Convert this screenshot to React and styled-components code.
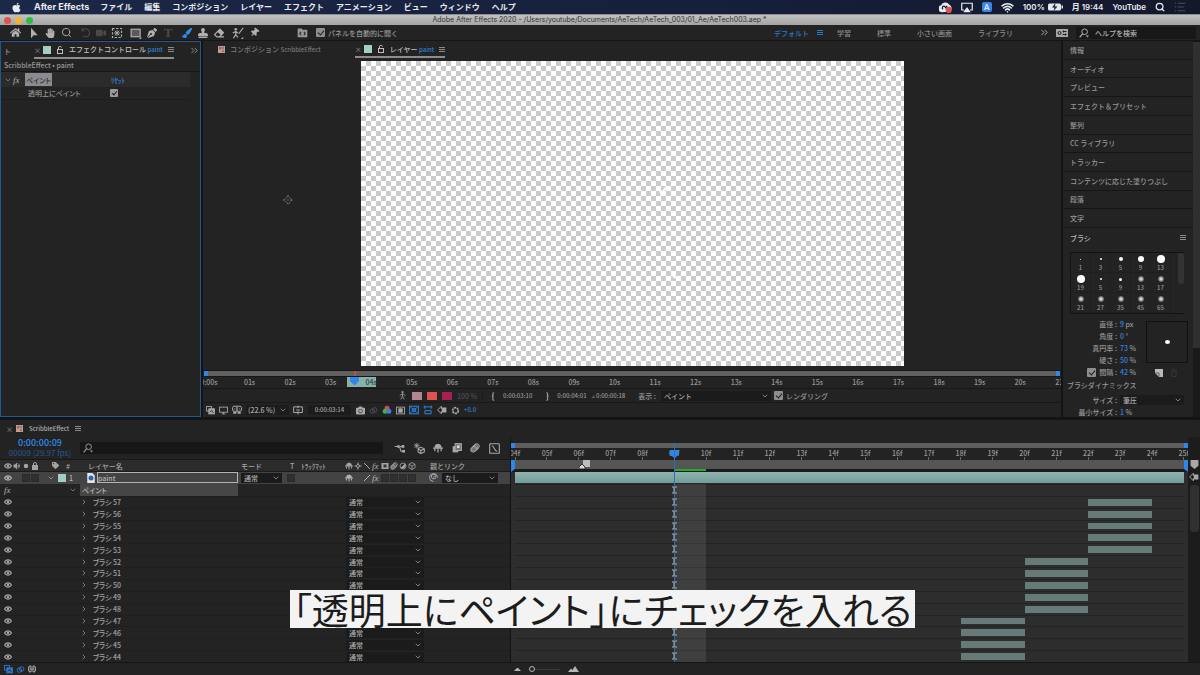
import React, { useState } from "react";
import styled, { createGlobalStyle } from "styled-components";
import {
  FaApple,
  FaCamera,
  FaEraser,
  FaHandPaper,
  FaHome,
  FaPaintBrush,
  FaPenNib,
  FaStamp,
  FaTag,
  FaThumbtack,
  FaVideo,
} from "react-icons/fa";
import { LuChevronDown, LuChevronRight, LuChevronsRight, LuSearch, LuWifi } from "react-icons/lu";

const menus = [
  "ファイル",
  "編集",
  "コンポジション",
  "レイヤー",
  "エフェクト",
  "アニメーション",
  "ビュー",
  "ウィンドウ",
  "ヘルプ",
];

const workspaces = ["学習", "標準", "小さい画面", "ライブラリ"];

const closedPanels = [
  "情報",
  "オーディオ",
  "プレビュー",
  "エフェクト＆プリセット",
  "整列",
  "CC ライブラリ",
  "トラッカー",
  "コンテンツに応じた塗りつぶし",
  "段落",
  "文字",
];

const brushes = [
  { size: 1, dot: 1 },
  { size: 3, dot: 2 },
  { size: 5, dot: 4 },
  { size: 9, dot: 6 },
  { size: 13, dot: 8 },
  { size: 19, dot: 8 },
  { size: 5, dot: 2 },
  { size: 9, dot: 3 },
  { size: 13, dot: 6, soft: true },
  { size: 17, dot: 6, soft: true },
  { size: 21, dot: 6, soft: true },
  { size: 27, dot: 6, soft: true },
  { size: 35, dot: 6, soft: true },
  { size: 45, dot: 6, soft: true },
  { size: 65, dot: 6, soft: true },
];

const FIRST_FRAME = 4;
const LAST_FRAME = 25;
const frames = Array.from({ length: LAST_FRAME - FIRST_FRAME + 1 }, (_, i) => FIRST_FRAME + i);
const seconds = Array.from({ length: 22 }, (_, i) => i);

// 新しいストロークほど上に並ぶ
const strokes = Array.from({ length: 14 }, (_, i) => {
  const no = 57 - i;
  let start = 18;
  if (no >= 53) start = 22;
  else if (no >= 48) start = 20;
  return { no, start, end: start + 2 };
});

const pad = n => String(n).padStart(2, "0");

const Glyph = ({ size = 10, children, ...rest }) => (
  <svg
    width={size}
    height={size}
    viewBox="0 0 16 16"
    fill="none"
    stroke="currentColor"
    strokeWidth="1.6"
    aria-hidden="true"
    {...rest}
  >
    {children}
  </svg>
);

const MenuGlyph = () => (
  <svg width="6" height="7" viewBox="0 0 6 7" aria-hidden="true">
    <path d="M0 1 H6 V2 H0 Z M0 3 H6 V4 H0 Z M0 5 H6 V6 H0 Z" fill="#8a8a8a" />
  </svg>
);
const EyeGlyph = () => (
  <Glyph size={8}>
    <path d="M1 8 C4 2.500 12 2.500 15 8 C12 13.500 4 13.500 1 8 Z" strokeWidth="2.4" />
    <circle cx="8" cy="8" r="2.600" fill="currentColor" stroke="none" />
  </Glyph>
);
const LockGlyph = ({ open }) => (
  <Glyph size={8}>
    <rect x="3" y="7" width="10" height="8" fill={open ? "none" : "currentColor"} strokeWidth="2" />
    <path d={open ? "M5 7 V4 A3 3 0 0 1 11 3" : "M5 7 V4 A3 3 0 0 1 11 4 V7"} strokeWidth="2" />
  </Glyph>
);
const ArrowGlyph = () => (
  <Glyph size={12}>
    <path d="M4 1 L4 15 L7.5 11 L13 11 Z" fill="currentColor" stroke="none" />
  </Glyph>
);
const RotateGlyph = () => (
  <Glyph size={11}>
    <path d="M3 5 A6 6 0 1 1 4 13 M3 1 V5.5 H7.5" />
  </Glyph>
);
const AnchorGlyph = () => (
  <Glyph size={12}>
    <rect x="2" y="2" width="12" height="12" strokeDasharray="3 2" />
    <path d="M5 5 L11 11 M11 5 L5 11 M8 4 V12 M4 8 H12" strokeWidth="1.2" />
  </Glyph>
);
const RectGlyph = () => (
  <Glyph size={12}>
    <rect x="1.500" y="3" width="12" height="10" fill="#5a5a5a" />
    <path d="M15 13 V16 H12 Z" fill="currentColor" stroke="none" />
  </Glyph>
);
const RotoGlyph = () => (
  <Glyph size={12}>
    <circle cx="5" cy="3" r="1.800" fill="currentColor" stroke="none" />
    <path d="M1 8 L5 6 L8 8 M5 6 V10 L2 15 M5 10 L8 14 M15 1 L9 9" />
    <path d="M15 13 V16 H12 Z" fill="currentColor" stroke="none" />
  </Glyph>
);
const PanelGlyph = () => (
  <Glyph size={11}>
    <path d="M1 2 H7 L8 4 H15 V15 H1 Z" fill="currentColor" stroke="none" />
    <path d="M6 7 L4 9.500 L6 12 M10 7 L12 9.500 L10 12" stroke="#232323" />
  </Glyph>
);
const CompGlyph = () => (
  <Glyph size={7}>
    <rect x="0" y="0" width="16" height="16" fill="#b9a3a0" stroke="none" />
    <rect x="2" y="2" width="6" height="6" fill="#c5574f" stroke="none" />
    <rect x="9" y="2" width="5" height="5" fill="#5d88b5" stroke="none" />
    <rect x="9" y="9" width="5" height="5" fill="#c9654c" stroke="none" />
    <rect x="2" y="9" width="5" height="5" fill="#d6a24e" stroke="none" />
  </Glyph>
);
const CloudGlyph = () => (
  <Glyph size={13}>
    <path d="M4 13 A3.500 3.500 0 0 1 3 6 A5 5 0 0 1 12 5 A4 4 0 0 1 13 12 Z" fill="currentColor" />
    <path d="M5 10 A2 2 0 1 1 8 9 L10 6" stroke="#17203a" />
    <circle cx="12" cy="11" r="3.800" fill="#e0504c" stroke="none" />
  </Glyph>
);
const AirplayGlyph = () => (
  <Glyph size={12}>
    <path d="M4 12 H1 V3 H15 V12 H12" />
    <path d="M8 8 L13 15 H3 Z" fill="currentColor" stroke="none" />
  </Glyph>
);
const BatteryGlyph = () => (
  <svg width="15" height="8" viewBox="0 0 30 16" aria-hidden="true">
    <rect x="0" y="1" width="26" height="14" rx="3" fill="#e4e8ee" />
    <rect x="27" y="5" width="3" height="6" fill="#e4e8ee" />
    <path d="M15 0 L8 9 H13 L11 16 L19 7 H14 Z" fill="#17203a" />
  </svg>
);
const ListGlyph = () => (
  <Glyph size={12}>
    <path d="M1 3 H3 M5 3 H15 M1 8 H3 M5 8 H13 M1 13 H3 M5 13 H15" />
  </Glyph>
);
const DockGlyph = () => (
  <svg width="12" height="8" viewBox="0 0 24 16" aria-hidden="true">
    <rect width="24" height="16" fill="#a6a6a6" />
    <circle cx="7" cy="8" r="3" fill="none" stroke="#222" strokeWidth="2" />
    <path d="M13 5 H21 M13 11 H21 M15 3 V7 M19 9 V13" stroke="#222" strokeWidth="2" />
  </svg>
);
const SpeakerGlyph = () => (
  <Glyph size={8}>
    <path d="M1 5 H4 L8 1 V15 L4 11 H1 Z" fill="currentColor" stroke="none" />
    <path d="M10 3 A6 6 0 0 1 10 13 M10 6 V10" strokeWidth="2" />
  </Glyph>
);
const DotGlyph = () => (
  <Glyph size={8}>
    <circle cx="8" cy="8" r="4.500" fill="currentColor" stroke="none" />
  </Glyph>
);
const ShyGlyph = ({ size = 8 }) => (
  <Glyph size={size}>
    <path d="M3 7 A5 5 0 0 1 13 7 Z" fill="currentColor" />
    <path d="M0 8 H16 M8 4 V15 M3 9 V13 M13 13 V9" strokeWidth="2" />
  </Glyph>
);
const SunGlyph = () => (
  <Glyph size={8}>
    <circle cx="8" cy="8" r="3" strokeWidth="2" />
    <path d="M8 1 V4 M8 12 V15 M1 8 H4 M12 8 H15" strokeWidth="2" />
  </Glyph>
);
const SlashGlyph = ({ back }) => (
  <Glyph size={8}>
    <path d={back ? "M2 2 L14 14" : "M14 2 L2 14"} strokeWidth="2" />
  </Glyph>
);
const FilmGlyph = () => (
  <Glyph size={8}>
    <rect x="1" y="2" width="14" height="12" fill="currentColor" stroke="none" />
    <rect x="5" y="5" width="6" height="6" fill="#333" stroke="none" />
  </Glyph>
);
const FramesGlyph = () => (
  <Glyph>
    <rect x="1" y="5" width="9" height="10" fill="currentColor" stroke="none" />
    <rect x="5" y="1" width="10" height="11" fill="#777" />
    <rect x="8" y="4" width="4" height="4" fill="#ddd" stroke="none" />
  </Glyph>
);
const BlurGlyph = ({ size = 8 }) => (
  <Glyph size={size}>
    <ellipse cx="10" cy="6" rx="5" ry="4" transform="rotate(-45 10 6)" />
    <ellipse cx="8" cy="8" rx="5" ry="4" transform="rotate(-45 8 8)" />
    <ellipse cx="6" cy="10" rx="5" ry="4" transform="rotate(-45 6 10)" fill="#777" />
  </Glyph>
);
const HalfGlyph = () => (
  <Glyph size={8}>
    <circle cx="8" cy="8" r="6" />
    <path d="M4 12 A6 6 0 0 0 12 4 Z" fill="currentColor" />
  </Glyph>
);
const CubeGlyph = ({ size = 8 }) => (
  <Glyph size={size}>
    <path d="M8 1 L14 4.500 V11.500 L8 15 L2 11.500 V4.500 Z M2 4.500 L8 8 L14 4.500 M8 8 V15" />
  </Glyph>
);
const BracketGlyph = () => (
  <Glyph size={8}>
    <path d="M5 1 L1 5 V11 L5 15 M11 1 L15 5 V11 L11 15 M6 2 V14 M10 2 V14 M3 8 H13" strokeWidth="2.2" />
  </Glyph>
);
const SpiralGlyph = () => (
  <Glyph size={9}>
    <path d="M8 8 A2 2 0 1 1 10 10 A4 4 0 1 1 12 5 M8 15 A7 7 0 1 1 15 8" />
  </Glyph>
);
const FlowGlyph = () => (
  <Glyph size={11}>
    <path d="M1 5 H7 M9 5 H12 M8 5 L10 12 H13" />
    <rect x="5" y="3" width="3" height="4" fill="currentColor" stroke="none" />
    <rect x="11" y="3" width="4" height="4" fill="currentColor" stroke="none" />
    <rect x="12" y="10" width="4" height="4" fill="currentColor" stroke="none" />
  </Glyph>
);
const DraftGlyph = () => (
  <Glyph size={11}>
    <path d="M10 6 L15 8.500 V13 L10 15.500 L6 13 V8.500 Z M6 8.500 L10 11 L15 8.500 M10 11 V15" />
    <path d="M4 0 V8 M0 4 H8 M1 1 L7 7 M7 1 L1 7" strokeWidth="1.2" />
  </Glyph>
);
const GraphGlyph = () => (
  <Glyph size={11}>
    <rect x="1" y="1" width="14" height="14" rx="1" />
    <path d="M4 4 C8 4 7 12 12 12" />
  </Glyph>
);
const StackGlyph = () => (
  <Glyph size={9}>
    <rect x="1" y="1" width="9" height="8" />
    <rect x="5" y="5" width="10" height="9" fill="currentColor" />
    <path d="M7 11 L10 8 L13 12" stroke="#232323" />
  </Glyph>
);
const MonitorGlyph = () => (
  <Glyph size={9}>
    <rect x="1" y="2" width="14" height="9" />
    <path d="M5 14 H11 M8 11 V14" />
  </Glyph>
);
const MaskGlyph = () => (
  <Glyph size={10}>
    <rect x="1" y="2" width="14" height="8" rx="2" />
    <path d="M8 3 V9 M4 6 H5 M11 6 H12" strokeWidth="2" />
    <path d="M2 11 H7 V14 H2 Z M9 11 H14 V14 H9 Z" fill="currentColor" stroke="none" />
  </Glyph>
);
const GridGlyph = () => (
  <Glyph size={10}>
    <path d="M1 3 H15 V12 H1 Z M8 1 V5 M8 10 V15 M5 8 H11" />
  </Glyph>
);
const LinkGlyph = () => (
  <Glyph size={9}>
    <circle cx="6" cy="9" r="4" />
    <circle cx="10" cy="7" r="4" />
  </Glyph>
);
const RgbGlyph = () => (
  <Glyph size={10}>
    <circle cx="8" cy="5" r="4" fill="#e04848" stroke="none" />
    <circle cx="5" cy="10" r="4" fill="#38b249" stroke="none" />
    <circle cx="11" cy="10" r="4" fill="#3f7de8" stroke="none" />
  </Glyph>
);
const AlphaGlyph = () => (
  <Glyph size={9}>
    <rect x="1" y="2" width="14" height="12" />
    <rect x="5" y="5" width="6" height="6" fill="currentColor" />
  </Glyph>
);
const NetGlyph = () => (
  <Glyph size={10}>
    <rect x="1" y="2" width="14" height="12" />
    <path d="M1 2 L15 14 M15 2 L1 14" strokeWidth="1.2" />
    <circle cx="8" cy="8" r="3" />
  </Glyph>
);
const RegionGlyph = () => (
  <Glyph size={10}>
    <path d="M1 3 H15 M3 1 V6 M13 1 V6 M3 9 V14 H13 V9 Z" />
  </Glyph>
);
const FastGlyph = () => (
  <Glyph size={10}>
    <path d="M7 2 L1 8 L7 14 V10 H10 V6 H7 Z" />
    <rect x="8" y="4" width="7" height="8" fill="currentColor" stroke="none" />
  </Glyph>
);
const ApertureGlyph = () => (
  <Glyph size={9}>
    <circle cx="8" cy="8" r="5" strokeWidth="3" strokeDasharray="4 1" />
  </Glyph>
);
const FigureGlyph = () => (
  <Glyph size={9}>
    <circle cx="8" cy="2" r="2" fill="currentColor" stroke="none" />
    <path d="M8 4 V9 L5 15 M8 9 L11 15 M3 8 L8 5 L13 8" />
  </Glyph>
);
const DocGlyph = () => (
  <Glyph size={10}>
    <path d="M2 0 H10 L14 4 V16 H2 Z" fill="#e6e6e6" stroke="none" />
    <circle cx="8" cy="8" r="4" fill="#2c62b8" stroke="none" />
  </Glyph>
);
const SearchGlyph = ({ size = 10 }) => (
  <Glyph size={size}>
    <circle cx="9" cy="6" r="4.500" />
    <path d="M6 9 L1 15" strokeWidth="2" />
    <path d="M11 12 H16 L13.500 15 Z" fill="currentColor" stroke="none" />
  </Glyph>
);
const PlayheadGlyph = () => (
  <svg width="9" height="8" viewBox="0 0 9 8" aria-hidden="true">
    <path d="M0 0 H9 V4 L5 8 H4 L0 4 Z" fill="#2d86ea" />
  </svg>
);
const MountainGlyph = ({ big }) => (
  <svg width={big ? 11 : 7} height={big ? 6 : 4} viewBox="0 0 22 12" aria-hidden="true">
    <path d={big ? "M0 12 L6 5 L9 8 L14 0 L22 12 Z" : "M0 12 L9 3 L13 3 L22 12 Z"} fill="#b5b5b5" />
  </svg>
);

const Dropdown = ({ label, value, width }) => (
  <SelectBox $width={width}>
    <select aria-label={label} defaultValue={value}>
      <option>{value}</option>
    </select>
    <LuChevronDown size={8} aria-hidden="true" />
  </SelectBox>
);

const App = () => {
  const [onTransparent, setOnTransparent] = useState(true);
  const [rendering, setRendering] = useState(true);
  const [autoOpen, setAutoOpen] = useState(true);
  const [spacing, setSpacing] = useState(true);

  const playhead = ((9 - FIRST_FRAME) / (LAST_FRAME - FIRST_FRAME)) * 100;
  const oneFrame = 100 / (LAST_FRAME - FIRST_FRAME);

  return (
    <Screen>
      <GlobalStyle />

      <MenuBar>
        <FaApple size={11} />
        <AppName>After Effects</AppName>
        {menus.map(m => (
          <MenuItem key={m}>{m}</MenuItem>
        ))}
        <MenuStatus>
          <CloudGlyph />
          <AirplayGlyph />
          <InputBadge>A</InputBadge>
          <LuWifi size={13} strokeWidth={3} />
          <Battery>
            100% <BatteryGlyph />
          </Battery>
          <span>月 19:44</span>
          <span>YouTube</span>
          <LuSearch size={10} strokeWidth={3} />
          <Faded>
            <ListGlyph />
          </Faded>
        </MenuStatus>
      </MenuBar>

      <TitleBar>
        <Light $color="#e0524c" />
        <Light $color="#f4b32e" />
        <Light $color="#2bbf3c" />
        <WindowTitle>
          Adobe After Effects 2020 - /Users/youtube/Documents/AeTech/AeTech_003/01_Ae/AeTech003.aep *
        </WindowTitle>
      </TitleBar>

      <Toolbar>
        <ToolGroup>
          <Tool aria-label="ホーム"><FaHome size={11} /></Tool>
        </ToolGroup>
        <ToolGroup>
          <Tool aria-label="選択ツール"><ArrowGlyph /></Tool>
          <Tool aria-label="手のひらツール"><FaHandPaper size={10} /></Tool>
          <Tool aria-label="ズームツール"><LuSearch size={11} /></Tool>
        </ToolGroup>
        <ToolGroup>
          <Tool $dim aria-label="回転ツール"><RotateGlyph /></Tool>
          <Tool $dim aria-label="カメラツール"><FaVideo size={10} /></Tool>
          <Tool aria-label="アンカーポイントツール"><AnchorGlyph /></Tool>
        </ToolGroup>
        <ToolGroup>
          <Tool aria-label="長方形ツール"><RectGlyph /></Tool>
          <Tool aria-label="ペンツール"><FaPenNib size={10} /></Tool>
          <Tool $dim aria-label="横書き文字ツール"><TypeMark>T</TypeMark></Tool>
        </ToolGroup>
        <ToolGroup>
          <Tool $active aria-label="ブラシツール"><FaPaintBrush size={10} /></Tool>
          <Tool aria-label="コピースタンプツール"><FaStamp size={10} /></Tool>
          <Tool aria-label="消しゴムツール"><FaEraser size={10} /></Tool>
        </ToolGroup>
        <ToolGroup>
          <Tool aria-label="ロトブラシツール"><RotoGlyph /></Tool>
          <Tool aria-label="パペットピンツール"><Tilt><FaThumbtack size={9} /></Tilt></Tool>
        </ToolGroup>
        <ToolOptions>
          <PanelGlyph />
          <Check>
            <input type="checkbox" checked={autoOpen} onChange={e => setAutoOpen(e.target.checked)} />
            パネルを自動的に開く
          </Check>
        </ToolOptions>
        <Workspaces>
          <Workspace $active>
            デフォルト <BlueMenu><MenuGlyph /></BlueMenu>
          </Workspace>
          {workspaces.map(w => (
            <Workspace key={w}>{w}</Workspace>
          ))}
          <LuChevronsRight size={11} />
        </Workspaces>
        <DockGlyph />
        <HelpSearch>
          <SearchGlyph />
          <input type="text" placeholder="ヘルプを検索" aria-label="ヘルプを検索" />
        </HelpSearch>
      </Toolbar>

      <Workarea>
        <EffectPanel>
          <EffectTabs>
            <TabStub>ト</TabStub>
            <Tab $active>
              <Close>×</Close>
              <Swatch />
              <LockGlyph open />
              <span>エフェクトコントロール <TabName $blue>paint</TabName></span>
              <MenuGlyph />
            </Tab>
            <LuChevronsRight size={11} />
          </EffectTabs>
          <EffectPath>ScribbleEffect • paint</EffectPath>
          <EffectHead>
            <LuChevronDown size={8} />
            <Fx>fx</Fx>
            <EffectName>ペイント</EffectName>
            <Reset type="button">ﾘｾｯﾄ</Reset>
          </EffectHead>
          <EffectRow>
            <label htmlFor="transparent">透明上にペイント</label>
            <CheckInput
              id="transparent"
              type="checkbox"
              checked={onTransparent}
              onChange={e => setOnTransparent(e.target.checked)}
            />
          </EffectRow>
        </EffectPanel>

        <Viewer>
          <ViewerTabs>
            <Tab>
              <CompGlyph />
              <span>コンポジション <TabName>ScribbleEffect</TabName></span>
            </Tab>
            <Tab $active>
              <Close>×</Close>
              <Swatch />
              <LockGlyph open />
              <span>レイヤー <TabName $blue>paint</TabName></span>
              <MenuGlyph />
            </Tab>
          </ViewerTabs>
          <Stage>
            <Canvas>
              <svg viewBox="0 0 543 305" width="100%" height="100%" aria-hidden="true">
                <path d="M306 125 L301 132 M299 129 L301 135 M312 215 L318 219" stroke="#fff" strokeWidth="2" />
              </svg>
            </Canvas>
            <Cursor>
              <Glyph size={10} strokeDasharray="2 2">
                <circle cx="8" cy="8" r="5" />
                <path d="M8 0 V3 M8 13 V16 M0 8 H3 M13 8 H16 M8 7 V9" />
              </Glyph>
            </Cursor>
          </Stage>
          <ViewerNav>
            <RedTick style={{ marginLeft: "17.5%" }} />
          </ViewerNav>
          <ViewerRuler>
            <WorkRange style={{ left: "16.8%", width: "3.4%" }} />
            {seconds.map(s => (
              <Mark key={s} $dark={s === 4}>{s === 0 ? "0:00s" : `${pad(s)}s`}</Mark>
            ))}
            <ViewerHead style={{ left: "17.1%" }}>
              <PlayheadGlyph />
            </ViewerHead>
          </ViewerRuler>
          <ViewerRow>
            <PaintTools>
              <FigureGlyph />
              <Chip $color="#b5868f" />
              <Chip $color="#e0524f" />
              <Chip $color="#a91f52" />
              <Faded>100 %</Faded>
            </PaintTools>
            <Divider />
            <Brace>{"{"}</Brace>
            <Time>0:00:03:10</Time>
            <Brace>{"}"}</Brace>
            <Time>0:00:04:01</Time>
            <Time>▵ 0:00:00:18</Time>
            <ViewField>
              表示 :
              <Dropdown label="表示" value="ペイント" width={110} />
            </ViewField>
            <Check>
              <input type="checkbox" checked={rendering} onChange={e => setRendering(e.target.checked)} />
              レンダリング
            </Check>
          </ViewerRow>
          <ViewerFooter>
            <StackGlyph />
            <MonitorGlyph />
            <MaskGlyph />
            <Zoom>
              (22.6 %) <LuChevronDown size={8} />
            </Zoom>
            <GridGlyph />
            <TimeBox>0:00:03:14</TimeBox>
            <FaCamera size={9} />
            <Faded><LinkGlyph /></Faded>
            <RgbGlyph />
            <AlphaGlyph />
            <Blue><NetGlyph /></Blue>
            <Blue><RegionGlyph /></Blue>
            <FastGlyph />
            <ApertureGlyph />
            <TabName $blue>+0.0</TabName>
          </ViewerFooter>
        </Viewer>

        <SidePanels>
          <SideContent>
            <PanelList>
              {closedPanels.map(p => (
                <li key={p}>{p}</li>
              ))}
            </PanelList>
            <BrushTitle>
              ブラシ <MenuGlyph />
            </BrushTitle>
            <BrushPicker>
              <BrushGrid>
                {brushes.map((b, i) => (
                  <BrushCell key={i}>
                    <BrushDotBox>
                      <BrushDot $size={b.dot} $soft={b.soft} />
                    </BrushDotBox>
                    {b.size}
                  </BrushCell>
                ))}
              </BrushGrid>
              <BrushScroll />
            </BrushPicker>
            <BrushSettings>
              <BrushValues>
                <dt>直径 :</dt>
                <dd><Blue>9</Blue> px</dd>
                <dt>角度 :</dt>
                <dd><Blue>0</Blue> °</dd>
                <dt>真円率 :</dt>
                <dd><Blue>73</Blue> %</dd>
                <dt>硬さ :</dt>
                <dd><Blue>50</Blue> %</dd>
                <dt>
                  <Check>
                    <input type="checkbox" checked={spacing} onChange={e => setSpacing(e.target.checked)} />
                    間隔 :
                  </Check>
                </dt>
                <dd><Blue>42</Blue> %</dd>
              </BrushValues>
              <BrushSide>
                <BrushPreview>
                  <i />
                </BrushPreview>
                <BrushButtons>
                  <Glyph size={8}>
                    <path d="M0 0 H16 V16 H8 L0 8 Z" fill="#b9b9b9" stroke="none" />
                    <path d="M1 8 H8 V15" stroke="#444" />
                  </Glyph>
                  <Glyph size={8} stroke="#3b3b3b">
                    <path d="M2 4 H14 M4 4 V15 H12 V4 M6 1 H10" />
                  </Glyph>
                </BrushButtons>
              </BrushSide>
            </BrushSettings>
            <Dynamics>ブラシダイナミックス</Dynamics>
            <DynamicsRow>
              <span>サイズ :</span>
              <Dropdown label="サイズ" value="筆圧" width={64} />
            </DynamicsRow>
            <DynamicsRow>
              <span>最小サイズ :</span>
              <span><Blue>1</Blue> %</span>
            </DynamicsRow>
          </SideContent>
          <SideScroll />
        </SidePanels>
      </Workarea>

      <Timeline>
        <TimelineTabs>
          <Close>×</Close>
          <CompGlyph />
          <TabName>ScribbleEffect</TabName>
          <MenuGlyph />
        </TimelineTabs>

        <TimelineBody>
          <LayerSide>
            <LayerTools>
              <Timecode>
                <strong>0:00:00:09</strong>
                <small>00009 (29.97 fps)</small>
              </Timecode>
              <LayerSearch>
                <SearchGlyph />
                <input type="text" aria-label="レイヤーを検索" />
              </LayerSearch>
              <LayerIcons>
                <FlowGlyph />
                <DraftGlyph />
                <ShyGlyph size={10} />
                <FramesGlyph />
                <BlurGlyph size={10} />
                <GraphGlyph />
              </LayerIcons>
            </LayerTools>
            <ColumnHead>
              <AvCell>
                <EyeGlyph />
                <SpeakerGlyph />
                <DotGlyph />
                <LockGlyph />
              </AvCell>
              <LabelCell $head>
                <FaTag size={7} />
                #
              </LabelCell>
              <HeadCell>レイヤー名</HeadCell>
              <HeadCell>モード</HeadCell>
              <HeadCell>T　ﾄﾗｯｸﾏｯﾄ</HeadCell>
              <SwitchCell>
                <ShyGlyph />
                <SunGlyph />
                <SlashGlyph back />
                <Fx>fx</Fx>
                <FilmGlyph />
                <BlurGlyph />
                <HalfGlyph />
                <CubeGlyph />
              </SwitchCell>
              <HeadCell>親とリンク</HeadCell>
            </ColumnHead>
            <LayerRows>
              <LayerRow>
                <AvCell>
                  <EyeGlyph />
                  <b />
                  <Slot />
                  <Slot />
                </AvCell>
                <LabelCell>
                  <LuChevronDown size={8} />
                  <Swatch />
                  1
                </LabelCell>
                <NameCell>
                  <DocGlyph />
                  <input type="text" defaultValue="paint" aria-label="レイヤー名" />
                </NameCell>
                <Dropdown label="モード" value="通常" width={41} />
                <MatteCell>
                  <Slot />
                </MatteCell>
                <SwitchCell>
                  <ShyGlyph />
                  <b />
                  <SlashGlyph />
                  <Fx>fx</Fx>
                  <Slot />
                  <Slot />
                  <Slot />
                  <Slot />
                </SwitchCell>
                <ParentCell>
                  <SpiralGlyph />
                  <Dropdown label="親とリンク" value="なし" width={56} />
                </ParentCell>
              </LayerRow>
              <PaintRow>
                <Fx>fx</Fx>
                <LuChevronDown size={8} />
                <span>ペイント</span>
              </PaintRow>
              {strokes.map(s => (
                <StrokeRow key={s.no}>
                  <EyeGlyph />
                  <LuChevronRight size={8} />
                  <span>ブラシ {s.no}</span>
                  <Dropdown label={`ブラシ ${s.no} モード`} value="通常" width={78} />
                </StrokeRow>
              ))}
            </LayerRows>
          </LayerSide>

          <TrackSide>
            <TrackNav />
            <FrameRuler>
              {frames.map(f => (
                <Mark key={f}>{pad(f)}f</Mark>
              ))}
            </FrameRuler>
            <WorkBar>
              <Cached style={{ left: `${playhead}%`, width: `${oneFrame}%` }} />
              <MarkerFlag style={{ left: `${(2 / 21) * 100}%` }}>
                <svg width="11" height="9" viewBox="0 0 11 9" aria-hidden="true">
                  <path d="M4 0 H11 V7 H4 Z" fill="#bdbdbd" />
                  <path d="M0 9 V7 L3 4 L6 7 V9 Z" fill="#d8d8d8" stroke="#333" strokeWidth="1" />
                </svg>
              </MarkerFlag>
            </WorkBar>
            <Tracks>
              <LayerBar />
              <Track />
              {strokes.map(s => (
                <Track key={s.no}>
                  <StrokeBar
                    style={{ gridColumn: `${s.start - FIRST_FRAME + 1} / ${s.end - FIRST_FRAME + 1}` }}
                  />
                </Track>
              ))}
              <FrameShade style={{ left: `${playhead}%`, width: `${oneFrame}%` }} />
            </Tracks>
            <HeadLayer>
              <HeadLine style={{ left: `${playhead}%` }}>
                <PlayheadGlyph />
                <BeamList>
                  {Array.from({ length: 15 }, (_, i) => (
                    <span key={i}>
                      <svg width="5" height="8" viewBox="0 0 5 8" aria-hidden="true">
                        <path d="M0 1 H2 M3 1 H5 M0 7 H2 M3 7 H5 M2 1 V7" stroke="#a9b4ba" />
                      </svg>
                    </span>
                  ))}
                </BeamList>
              </HeadLine>
            </HeadLayer>
          </TrackSide>

          <TrackScroll>
            <Glyph size={9}>
              <path d="M1 0 H15 V10 L8 16 L1 10 Z" fill="#a8a8a8" stroke="none" />
            </Glyph>
            <FastGlyph />
            <ScrollThumb />
          </TrackScroll>
        </TimelineBody>

        <TimelineFooter>
          <FooterIcons>
            <StackGlyph />
            <LinkGlyph />
            <Gray><BracketGlyph /></Gray>
          </FooterIcons>
          <ZoomBar>
            <MountainGlyph />
            <input type="range" min="0" max="100" defaultValue="0" aria-label="タイムラインのズーム" />
            <MountainGlyph big />
          </ZoomBar>
        </TimelineFooter>
      </Timeline>

      <Caption>
        <p>「透明上にペイント」にチェックを入れる</p>
      </Caption>
    </Screen>
  );
};

const GlobalStyle = createGlobalStyle`
  * {
    box-sizing: border-box;
  }

  body {
    margin: 0;
    background: #141414;
    color: #979797;
    font-family: "Noto Sans CJK JP", "Noto Sans", sans-serif;
    font-size: 7px;
    font-weight: 500;
    line-height: 10px;
  }

  button, input, select {
    margin: 0;
    padding: 0;
    border: 0;
    background: none;
    color: inherit;
    font: inherit;
    outline: none;
    appearance: none;
  }

  svg {
    flex: none;
    display: block;
  }
`;

const Screen = styled.div`
  position: relative;
  display: flex;
  flex-direction: column;
  height: 100vh;
  overflow: hidden;
  white-space: nowrap;
`;

const MenuBar = styled.nav`
  display: flex;
  align-items: center;
  flex: none;
  gap: 12px;
  height: 14px;
  padding: 0 14px 0 11px;
  background: linear-gradient(90deg, #1c2848, #161f3b 60%, #14182b);
  color: #e8ebf0;
  font-size: 8px;
  font-weight: 700;
`;

const AppName = styled.span`
  margin-right: -1px;
  font-family: Inter, "Liberation Sans", sans-serif;
  font-size: 9px;
  font-weight: 700;
`;

const MenuItem = styled.button`
  font-weight: 700;
`;

const MenuStatus = styled.div`
  display: flex;
  align-items: center;
  gap: 9px;
  margin-left: auto;
  font-family: Inter, "Noto Sans CJK JP", sans-serif;
  font-weight: 600;
`;

const InputBadge = styled.span`
  width: 10px;
  height: 10px;
  border-radius: 2px;
  background: #3a86e8;
  text-align: center;
`;

const Battery = styled.span`
  display: flex;
  align-items: center;
  gap: 3px;
`;

const Faded = styled.span`
  color: #4b4f58;
`;

const Gray = styled.span`
  color: #a0a0a0;
`;

const Blue = styled.span`
  color: #2f83dc;
`;

const TabName = styled.span`
  color: ${({ $blue }) => ($blue ? "#2f83dc" : "inherit")};
  font-size: 6px;
`;

const TitleBar = styled.header`
  display: flex;
  align-items: center;
  flex: none;
  gap: 4px;
  height: 11px;
  padding: 0 4px;
  background: linear-gradient(#c2c2c2, #a4a4a4);
  border-top: 1px solid #8a8d94;
`;

const Light = styled.span`
  width: 7px;
  height: 7px;
  border-radius: 50%;
  background: ${({ $color }) => $color};
`;

const WindowTitle = styled.h1`
  flex: 1;
  margin: 0;
  padding-right: 34px;
  color: #333;
  font-family: Inter, "Liberation Sans", sans-serif;
  font-size: 7px;
  font-weight: 400;
  text-align: center;
`;

const Toolbar = styled.div`
  display: flex;
  align-items: center;
  flex: none;
  height: 16px;
  padding: 0 4px 0 7px;
  background: #232323;
  border-bottom: 1px solid #161616;
  color: #b0b0b0;
`;

const ToolGroup = styled.div`
  display: flex;
  margin-right: 3px;
`;

const Tool = styled.button`
  display: flex;
  align-items: center;
  justify-content: center;
  width: 16px;
  height: 14px;
  color: ${({ $active, $dim }) => ($active ? "#2d8ceb" : $dim ? "#4a4a4a" : "#b0b0b0")};
`;

const Tilt = styled.span`
  transform: rotate(40deg);
`;

const TypeMark = styled.span`
  font-family: "Liberation Serif", serif;
  font-size: 13px;
  font-weight: 700;
`;

const Check = styled.label`
  display: inline-flex;
  align-items: center;
  gap: 3px;

  input {
    width: 9px;
    height: 9px;
    border-radius: 1px;
    background: #8e8e8e;
    position: relative;
  }

  input:checked::after {
    content: "";
    position: absolute;
    left: 3px;
    top: 1px;
    width: 3px;
    height: 5px;
    border: solid #1e1e1e;
    border-width: 0 1px 1px 0;
    transform: rotate(40deg);
  }
`;

const ToolOptions = styled.div`
  display: flex;
  align-items: center;
  gap: 8px;
  margin-left: 32px;
  color: #979797;
`;

const Workspaces = styled.div`
  display: flex;
  align-items: center;
  gap: 26px;
  margin-left: auto;
  padding-right: 6px;
`;

const Workspace = styled.button`
  display: flex;
  align-items: center;
  gap: 8px;
  color: ${({ $active }) => ($active ? "#2d78c8" : "#8c8c8c")};

  &:first-child {
    margin-right: -12px;
  }
`;

const BlueMenu = styled.span`
  path {
    fill: #2d78c8;
  }
`;

const HelpSearch = styled.div`
  display: flex;
  align-items: center;
  gap: 6px;
  width: 120px;
  height: 12px;
  margin-left: 8px;
  padding-left: 3px;
  background: #181818;

  input {
    width: 90px;
  }

  input::placeholder {
    color: #b4b4b4;
    opacity: 1;
  }
`;

const Workarea = styled.main`
  display: flex;
  flex: 376 1 0;
  min-height: 0;
  gap: 2px;
`;

const EffectPanel = styled.section`
  width: 201px;
  flex: none;
  background: #232323;
  border: 1px solid #24568f;
`;

const EffectTabs = styled.div`
  display: flex;
  align-items: center;
  height: 17px;
  padding: 0 0 0 3px;

  > svg {
    margin-left: auto;
  }
`;

const TabStub = styled.button`
  width: 30px;
  text-align: left;
`;

const Tab = styled.button`
  display: flex;
  align-items: center;
  gap: 5px;
  height: 16px;
  border-bottom: 2px solid ${({ $active }) => ($active ? "#8e8e8e" : "transparent")};
  color: ${({ $active }) => ($active ? "#c0c0c0" : "#7b7b7b")};
`;

const Close = styled.span`
  width: 4px;
  color: #777;
`;

const Swatch = styled.span`
  width: 8px;
  height: 8px;
  background: #a3cdc6;
`;

const EffectPath = styled.div`
  height: 13px;
  padding: 1px 3px;
  border-bottom: 1px solid #171717;
`;

const EffectHead = styled.div`
  display: flex;
  align-items: center;
  height: 15px;
  margin-right: 10px;
  padding-left: 3px;
  gap: 1px;
  background: #2b2b2b;
`;

const Fx = styled.i`
  width: 9px;
  color: #b5b5b5;
  font-family: "Liberation Serif", serif;
  font-size: 9px;
`;

const EffectName = styled.span`
  width: 27px;
  height: 13px;
  margin-left: 2px;
  padding: 2px 1px;
  background: #8b8a90;
  color: #2a2a2a;
  font-feature-settings: "palt";
`;

const Reset = styled.button`
  margin-left: 58px;
  color: #2f83dc;
`;

const EffectRow = styled.div`
  display: flex;
  align-items: center;
  height: 13px;
  margin-right: 10px;
  padding-left: 27px;
  border-bottom: 1px solid #1d1d1d;

  label {
    width: 82px;
    font-feature-settings: "palt";
  }
`;

const CheckInput = styled.input`
  position: relative;
  width: 8px;
  height: 8px;
  border-radius: 1px;
  background: #9a9a9a;

  &:checked::after {
    content: "";
    position: absolute;
    left: 3px;
    top: 1px;
    width: 2px;
    height: 4px;
    border: solid #1e1e1e;
    border-width: 0 1px 1px 0;
    transform: rotate(40deg);
  }
`;

const Viewer = styled.section`
  display: flex;
  flex: 1;
  flex-direction: column;
  min-width: 0;
  background: #232323;
`;

const ViewerTabs = styled.div`
  display: flex;
  gap: 34px;
  flex: none;
  height: 20px;
  padding: 1px 0 0 15px;
`;

const Stage = styled.div`
  position: relative;
  display: flex;
  justify-content: center;
  flex: 1;
  min-height: 0;
  padding-bottom: 4px;
`;

const Canvas = styled.div`
  height: 100%;
  aspect-ratio: 543 / 305;
  background: repeating-conic-gradient(#cbcbcb 0 25%, #fff 0 50%) 0 0 / 10px 10px;
`;

const Cursor = styled.span`
  position: absolute;
  left: 80px;
  top: 134px;
  color: #8a8a8a;
`;

const ViewerNav = styled.div`
  flex: none;
  height: 7px;
  border: solid #171717;
  border-width: 1px 0;
  background: linear-gradient(#2d86ea, #2d86ea) left / 4px 100% no-repeat,
    linear-gradient(#2d86ea, #2d86ea) right / 4px 100% no-repeat, #606060;
  margin: 0 1px;
`;

const RedTick = styled.span`
  display: block;
  width: 2px;
  height: 5px;
  background: #c94a4a;
`;

const ViewerRuler = styled.div`
  position: relative;
  display: flex;
  justify-content: space-between;
  flex: none;
  height: 11px;
  padding-left: 6px;
  overflow: hidden;
`;

const Mark = styled.span`
  position: relative;
  display: flex;
  justify-content: center;
  width: 0;
  color: ${({ $dark }) => ($dark ? "#34413f" : "inherit")};
`;

const WorkRange = styled.span`
  position: absolute;
  top: 0;
  bottom: 1px;
  background: #86b0ab;
`;

const ViewerHead = styled.span`
  position: absolute;
  top: 0;
`;

const ViewerRow = styled.div`
  display: flex;
  align-items: center;
  flex: none;
  height: 15px;
  padding-left: 195px;
  border: solid #181818;
  border-width: 1px 0;
`;

const PaintTools = styled.div`
  display: flex;
  align-items: center;
  gap: 5px;
  width: 84px;
`;

const Chip = styled.span`
  width: 10px;
  height: 8px;
  background: ${({ $color }) => $color};
`;

const Divider = styled.span`
  width: 1px;
  height: 10px;
  background: #1a1a1a;
`;

const Brace = styled.button`
  width: 20px;
  color: #d0d0d0;
  font-size: 8px;
  text-align: center;
`;

const Time = styled.span`
  margin-right: 5px;
  font-size: 6px;
`;

const SelectBox = styled.span`
  display: flex;
  align-items: center;
  width: ${({ $width }) => $width}px;
  height: 10px;
  padding: 0 2px 0 3px;
  background: #1b1b1b;
  color: #b0b0b0;

  select {
    flex: 1;
    min-width: 0;
    height: 10px;
    line-height: 10px;
  }
`;

const ViewField = styled.label`
  display: flex;
  align-items: center;
  gap: 5px;
  margin: 0 3px 0 8px;
`;

const ViewerFooter = styled.div`
  display: flex;
  align-items: center;
  flex: none;
  gap: 4px;
  height: 14px;
  padding-left: 3px;
  color: #a8a8a8;
`;

const Zoom = styled.button`
  display: flex;
  align-items: center;
  justify-content: space-between;
  width: 43px;
  height: 10px;
  padding: 0 2px;
  background: #1c1c1c;
`;

const TimeBox = styled.span`
  width: 43px;
  margin: 0 1px;
  background: #1c1c1c;
  font-size: 6px;
  text-align: center;
`;

const SidePanels = styled.aside`
  display: flex;
  flex: none;
  width: 137px;
  overflow: hidden;
`;

const SideContent = styled.div`
  flex: 1;
  background: #232323;
`;

const SideScroll = styled.div`
  width: 7px;
  margin-top: 1px;
  background: linear-gradient(#303030, #303030) top / 100% 306px no-repeat #1a1a1a;
`;

const PanelList = styled.ul`
  display: grid;
  grid-auto-rows: 1fr;
  height: 187px;
  margin: 0;
  padding: 0;
  list-style: none;

  li {
    display: flex;
    align-items: center;
    padding-left: 7px;
    border-bottom: 1px solid #161616;
  }
`;

const BrushTitle = styled.h2`
  display: flex;
  align-items: center;
  justify-content: space-between;
  height: 19px;
  margin: 0 0 5px;
  padding: 0 7px;
  color: #b8b8b8;
  font-size: 7px;
  font-weight: 500;
`;

const BrushPicker = styled.div`
  display: flex;
  height: 62px;
  margin: 0 9px 0 7px;
  border: 1px solid #131313;
  border-width: 1px 0 1px 1px;
`;

const BrushGrid = styled.div`
  display: grid;
  grid-template-columns: repeat(5, 20px);
  grid-auto-rows: 20px;
  flex: 1;
`;

const BrushCell = styled.button`
  display: flex;
  flex-direction: column;
  align-items: center;
  border: solid #1f1f1f;
  border-width: 0 1px 1px 0;
  font-size: 6px;
  line-height: 6px;
`;

const BrushDotBox = styled.span`
  display: flex;
  align-items: center;
  height: 12px;
`;

const BrushDot = styled.span`
  width: ${({ $size }) => $size}px;
  height: ${({ $size }) => $size}px;
  border-radius: 50%;
  background: ${({ $soft }) => ($soft ? "radial-gradient(#fff, #888 50%, #232323)" : "#fff")};
`;

const BrushScroll = styled.span`
  width: 6px;
  height: 31px;
  border-radius: 2px;
  background: #333;
`;

const BrushSettings = styled.div`
  display: flex;
  justify-content: space-between;
  padding: 4px 5px 0 0;
`;

const BrushValues = styled.dl`
  display: grid;
  grid-template-columns: 54px auto;
  grid-auto-rows: 12px;
  align-items: center;
  column-gap: 3px;
  margin: 0;

  dt {
    display: flex;
    justify-content: flex-end;
  }

  dd {
    margin: 0;
  }
`;

const BrushSide = styled.div`
  display: flex;
  flex-direction: column;
  gap: 6px;
  padding-top: 3px;
`;

const BrushPreview = styled.div`
  display: flex;
  align-items: center;
  justify-content: center;
  width: 42px;
  height: 42px;
  border: 1px solid #111;

  i {
    width: 5px;
    height: 4px;
    border-radius: 50%;
    background: #fff;
  }
`;

const BrushButtons = styled.div`
  display: flex;
  gap: 7px;
  padding-left: 9px;
`;

const Dynamics = styled.h3`
  margin: 2px 0 4px 4px;
  font-size: 7px;
  font-weight: 500;
`;

const DynamicsRow = styled.div`
  display: grid;
  grid-template-columns: 54px auto;
  align-items: center;
  column-gap: 3px;
  height: 12px;

  > span:first-child {
    text-align: right;
  }
`;

const Timeline = styled.section`
  display: flex;
  flex: 255 1 0;
  flex-direction: column;
  min-height: 0;
  border-top: 3px solid #141414;
  background: #232323;
`;

const TimelineTabs = styled.div`
  display: flex;
  align-items: center;
  flex: none;
  gap: 6px;
  height: 17px;
  padding-left: 6px;
  color: #b0b0b0;
`;

const TimelineBody = styled.div`
  display: flex;
  flex: 1;
  min-height: 0;
`;

const LayerSide = styled.div`
  display: flex;
  flex-direction: column;
  width: 511px;
  flex: none;
  border-right: 1px solid #121212;
`;

const LayerTools = styled.div`
  display: flex;
  align-items: center;
  flex: none;
  height: 23px;
  border-bottom: 1px solid #181818;
`;

const Timecode = styled.div`
  display: flex;
  flex-direction: column;
  align-items: center;
  width: 80px;
  line-height: 10px;

  strong {
    color: #2d8ceb;
    font-size: 9px;
    font-weight: 500;
  }

  small {
    color: #28588f;
    font-size: 8px;
    font-weight: 400;
  }
`;

const LayerSearch = styled.div`
  display: flex;
  align-items: center;
  width: 303px;
  height: 12px;
  padding-left: 3px;
  background: #171717;

  input {
    flex: 1;
  }
`;

const LayerIcons = styled.div`
  display: flex;
  align-items: center;
  justify-content: space-between;
  flex: 1;
  padding: 0 10px 0 11px;
  color: #a8a8a8;
`;

const ColumnHead = styled.div`
  display: grid;
  grid-template-columns: 47px 32px 162px 46px 56px 84px 1fr;
  align-items: center;
  flex: none;
  height: 12px;
  background: #2b2b2b;
  border-bottom: 1px solid #1b1b1b;
  color: #a4a4a4;
`;

const HeadCell = styled.span`
  padding-left: 3px;

  &:nth-child(3) {
    padding-left: 9px;
  }

  &:nth-child(4) {
    padding-left: 0;
  }
`;

const AvCell = styled.span`
  display: grid;
  grid-template-columns: repeat(4, 9px);
  align-items: center;
  padding-left: 4px;
`;

const LabelCell = styled.span`
  display: flex;
  align-items: center;
  gap: ${({ $head }) => ($head ? "7px" : "3px")};
  padding-left: ${({ $head }) => ($head ? "5px" : "0")};
`;

const SwitchCell = styled.span`
  display: grid;
  grid-template-columns: repeat(8, 9px);
  align-items: center;
  padding-left: 2px;
`;

const Slot = styled.span`
  width: 8px;
  height: 8px;
  background: #303030;
  border: 1px solid #2a2a2a;
`;

const LayerRows = styled.div`
  display: grid;
  grid-auto-rows: minmax(0, 1fr);
  flex: 1;
  min-height: 0;
`;

const LayerRow = styled.div`
  display: grid;
  grid-template-columns: 47px 32px 162px 46px 56px 84px 1fr;
  align-items: center;
  background: #434343;
  color: #b4b4b4;
`;

const NameCell = styled.span`
  display: flex;
  align-items: center;
  gap: 1px;
  padding: 0 3px 0 7px;

  input {
    flex: 1;
    min-width: 0;
    height: 11px;
    border: 1px solid #b4b4b4;
    line-height: 9px;
  }
`;

const MatteCell = styled.span`
  display: flex;
`;

const ParentCell = styled.span`
  display: flex;
  align-items: center;
  gap: 4px;
  padding-left: 2px;
`;

const PaintRow = styled.div`
  display: grid;
  grid-template-columns: 65px 11px 158px;
  align-items: center;
  padding-left: 4px;

  span {
    padding-left: 2px;
    background: #464646;
    color: #bcbcbc;
    font-feature-settings: "palt";
    line-height: 12px;
  }
`;

const StrokeRow = styled.div`
  display: grid;
  grid-template-columns: 76px 13px 253px auto;
  align-items: center;
  padding-left: 4px;
  border-top: 1px solid #1f1f1f;
  color: #a4a4a4;

  span {
    font-feature-settings: "palt";
  }
`;

const TrackSide = styled.div`
  position: relative;
  display: flex;
  flex: 1;
  flex-direction: column;
  min-width: 0;
  background: #2d2d2d;
`;

const TrackNav = styled.div`
  flex: none;
  height: 11px;
  border-top: 6px solid #232323;
  background: linear-gradient(#2d86ea, #2d86ea) left / 4px 100% no-repeat,
    linear-gradient(#2d86ea, #2d86ea) right / 4px 100% no-repeat, #5e5e5e;
`;

const FrameRuler = styled.div`
  display: flex;
  justify-content: space-between;
  flex: none;
  height: 12px;
  padding: 0 4px;
  overflow: hidden;
  background: #232323;

  ${Mark}::after {
    content: "";
    position: absolute;
    top: 9px;
    width: 1px;
    height: 3px;
    background: #6a6a6a;
  }
`;

const WorkBar = styled.div`
  position: relative;
  flex: none;
  height: 12px;
  border: solid #1b1b1b;
  border-width: 0 4px 3px;
  background: #555;
  border-left-color: #2d86ea;
  border-right-color: #2d86ea;
`;

const Cached = styled.span`
  position: absolute;
  bottom: -2px;
  height: 2px;
  background: #1fae2c;
`;

const MarkerFlag = styled.span`
  position: absolute;
  top: 0;
`;

const Tracks = styled.div`
  position: relative;
  display: grid;
  grid-auto-rows: minmax(0, 1fr);
  flex: 1;
  min-height: 0;
  margin: 0 4px;
`;

const LayerBar = styled.div`
  margin-bottom: 1px;
  background: linear-gradient(#93b3af, #6f9d98);
`;

const Track = styled.div`
  display: grid;
  grid-template-columns: repeat(21, 1fr);
  padding: 2px 0;
  border-top: 1px solid #232323;
`;

const StrokeBar = styled.span`
  background: #667b78;
`;

const FrameShade = styled.span`
  position: absolute;
  top: 12px;
  bottom: 0;
  background: rgba(255, 255, 255, 0.09);
`;

const HeadLayer = styled.div`
  position: absolute;
  top: 6px;
  right: 4px;
  bottom: 0;
  left: 4px;
  pointer-events: none;
`;

const HeadLine = styled.div`
  position: absolute;
  top: 0;
  bottom: 0;
  display: flex;
  flex-direction: column;
  align-items: center;
  width: 0;
  padding-top: 7px;

  &::before {
    content: "";
    position: absolute;
    top: 0;
    bottom: 0;
    width: 1px;
    background: #2d6fb8;
  }
`;

const BeamList = styled.div`
  position: absolute;
  top: 41px;
  bottom: 0;
  display: grid;
  grid-auto-rows: 1fr;

  span {
    display: flex;
    align-items: center;
  }
`;

const TrackScroll = styled.div`
  display: flex;
  flex-direction: column;
  align-items: center;
  flex: none;
  gap: 3px;
  width: 12px;
  padding-top: 23px;
  background: #1c1c1c;
  color: #a8a8a8;
`;

const ScrollThumb = styled.span`
  width: 9px;
  height: 47px;
  border-radius: 3px;
  background: #303030;
`;

const TimelineFooter = styled.footer`
  display: flex;
  align-items: center;
  flex: none;
  height: 13px;
  border-top: 1px solid #151515;
`;

const FooterIcons = styled.div`
  display: flex;
  gap: 3px;
  width: 511px;
  padding-left: 4px;
  color: #2f78c8;
`;

const ZoomBar = styled.div`
  display: flex;
  align-items: center;
  gap: 8px;
  padding: 0 3px;

  input {
    width: 31px;
    height: 8px;
    background: linear-gradient(#3a3a3a, #3a3a3a) center / 100% 1px no-repeat;
  }

  input::-webkit-slider-thumb {
    appearance: none;
    width: 6px;
    height: 6px;
    border: 1px solid #b5b5b5;
    border-radius: 50%;
    background: #232323;
  }
`;

// 字幕は画面全体の上に重ねる
const Caption = styled.div`
  position: absolute;
  right: 0;
  bottom: 47px;
  left: 0;
  display: flex;
  justify-content: center;
  padding-left: 5px;
  pointer-events: none;

  p {
    margin: 0;
    padding: 0 3px;
    background: #f3f3f3;
    color: #1c1c1c;
    font-feature-settings: "palt";
    font-size: 37px;
    font-weight: 400;
    line-height: 38px;
  }
`;

export default App;
